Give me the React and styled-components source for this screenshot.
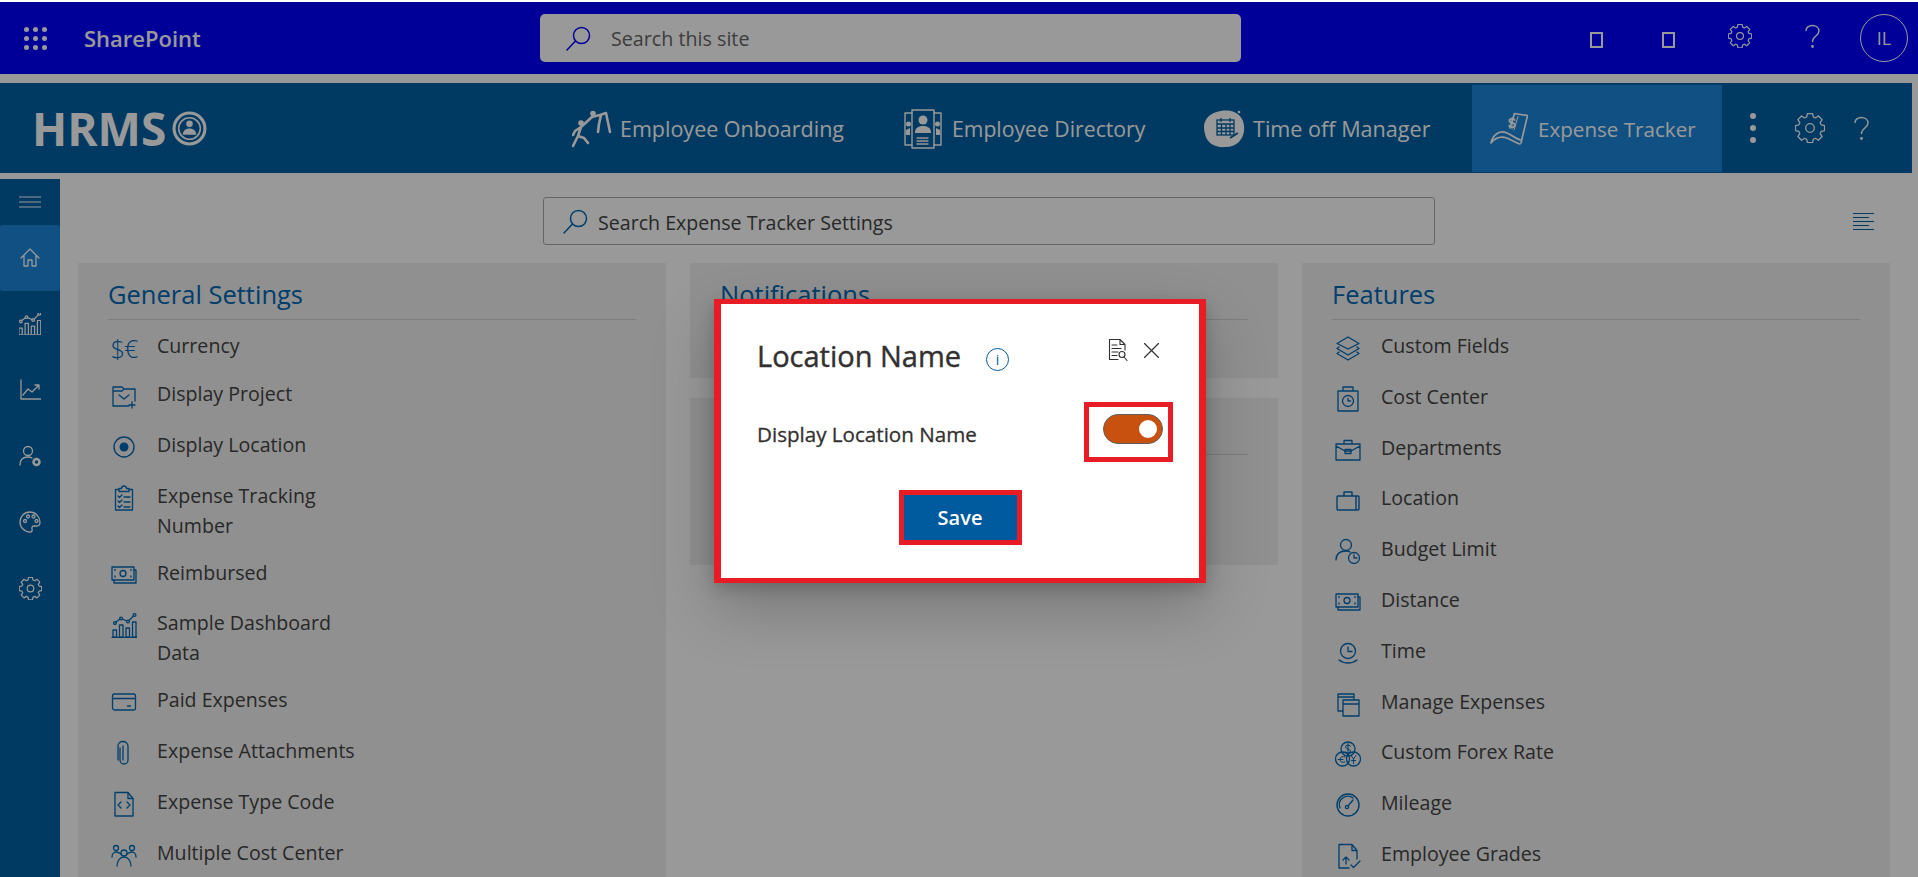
import React from 'react'
import styled, { createGlobalStyle } from 'styled-components'

const GlobalStyle = createGlobalStyle`
  html, body {
    margin: 0;
    padding: 0;
    background: #fff;
    font-family: "Open Sans", "Noto Sans", sans-serif;
  }
  * {
    box-sizing: border-box;
  }
`

const Page = styled.div`
  position: relative;
  width: 1918px;
  height: 877px;
  padding-top: 2px;
  overflow: hidden;
  background: #fff;
`

const SuiteBar = styled.header`
  height: 72px;
  display: flex;
  align-items: center;
  background: #0000ff;
  color: #fff;
`

const Brand = styled.div`
  width: 540px;
  padding-left: 24px;
  display: flex;
  align-items: center;
  gap: 37px;
`

const BrandName = styled.span`
  font-size: 22px;
  font-weight: 600;
`

const SiteSearch = styled.div`
  width: 701px;
  height: 48px;
  padding-left: 26px;
  display: flex;
  align-items: center;
  gap: 20px;
  border-radius: 5px;
  background: #fff;
  color: #0000ff;
  font-size: 19.7px;

  span {
    padding-top: 1px;
    color: #666;
  }
`

const SuiteActions = styled.div`
  flex: 1;
  padding-right: 10px;
  display: flex;
  justify-content: flex-end;
  align-items: center;
  gap: 24px;
`

const SuiteCell = styled.div`
  width: 48px;
  height: 48px;
  display: flex;
  justify-content: center;
  align-items: center;
  font-size: 18px;

  svg {
    margin-top: -4px;
  }
`

const Tofu = styled.span`
  width: 13px;
  height: 16px;
  margin-top: 3px;
  border: 2px solid #fff;
`

const Avatar = styled(SuiteCell)`
  border: 1px solid #fff;
  border-radius: 50%;
`

const AppBar = styled.div`
  width: 1912px;
  height: 90px;
  margin-top: 9px;
  display: flex;
  background: #0061a3;
  color: #fff;
`

const Logo = styled.div`
  width: 554px;
  padding-left: 32px;
  display: flex;
  align-items: center;
  gap: 6px;
  font-size: 46px;
  font-weight: 700;
`

const NavItem = styled.div`
  width: ${props => props.$w}px;
  margin: 2px 0 1px;
  padding-left: 18px;
  display: flex;
  align-items: center;
  gap: ${props => props.$gap || 10}px;
  font-size: ${props => props.$size || 21.2}px;
  background: ${props => (props.$active ? '#1c85d9' : 'transparent')};
`

const AppActions = styled.div`
  flex: 1;
  display: flex;
  align-items: center;
  padding-left: 28px;
  gap: 28px;

  svg:first-child {
    margin-right: 11px;
  }
`

const Body = styled.div`
  display: flex;
  margin-top: 6px;
`

const Sidebar = styled.nav`
  width: 60px;
  height: 700px;
  flex: none;
  background: #0061a3;
  color: #fff;
`

const SideToggle = styled.div`
  height: 46px;
  display: flex;
  justify-content: center;
  align-items: center;
`

const SideItem = styled.div`
  height: 66px;
  display: flex;
  justify-content: center;
  align-items: center;
  border-radius: 3px;
  background: ${props => (props.$active ? '#1c85d9' : 'transparent')};
`

const Content = styled.main`
  flex: 1;
  padding: 18px 28px 0 18px;
`

const Toolbar = styled.div`
  height: 48px;
  padding-left: 465px;
  display: flex;
  align-items: center;
`

const SettingsSearch = styled.div`
  width: 892px;
  height: 48px;
  padding-left: 19px;
  display: flex;
  align-items: center;
  gap: 10px;
  border: 1px solid #ababab;
  border-radius: 3px;
  color: #0068b4;
  font-size: 19.6px;

  span {
    padding-top: 2px;
    color: #444;
  }
`

const AlignIcon = styled.div`
  width: 21px;
  margin-left: auto;
  margin-right: 16px;
  display: flex;
  flex-direction: column;
  gap: 3px;
`

const AlignLine = styled.i`
  display: block;
  height: 1px;
  width: ${props => (props.$short ? '16px' : '21px')};
  background: #0061a3;
`

const Columns = styled.div`
  margin-top: 18px;
  display: grid;
  grid-template-columns: repeat(3, 588px);
  gap: 24px;
  align-items: start;
`

const Stack = styled.div`
  display: flex;
  flex-direction: column;
  gap: 20px;
`

const Panel = styled.section`
  height: ${props => props.$h}px;
  padding: 0 30px;
  background: #f0f0f0;
`

const PanelHead = styled.h2`
  height: 57px;
  margin: 0;
  padding-top: 14px;
  border-bottom: 1px solid #d0d0d0;
  color: #0068b4;
  font-size: 25.5px;
  font-weight: 400;
  line-height: 34px;
`

const List = styled.ul`
  margin: 0;
  padding: 11px 0 0;
  list-style: none;
`

const Row = styled.li`
  height: ${props => props.$h || 50.8}px;
  display: flex;
  align-items: flex-start;
  color: #444;
  font-size: 19.6px;
  line-height: 30px;
`

const RowIcon = styled.span`
  width: 32px;
  height: 30px;
  margin: 2px 17px 0 0;
  flex: none;
  display: flex;
  justify-content: center;
  align-items: center;
  color: #0068b4;
`

const Money = styled.span`
  font-size: 25px;
  font-weight: 300;
  letter-spacing: -1px;
`

const RowText = styled.span`
  max-width: 200px;
`

const Overlay = styled.div`
  position: absolute;
  top: 2px;
  right: 0;
  bottom: 0;
  left: 0;
  padding: 297px 0 0 2px;
  display: flex;
  justify-content: center;
  align-items: flex-start;
  background: rgba(0, 0, 0, 0.4);
`

const Modal = styled.div`
  width: 492px;
  height: 284px;
  border-style: solid;
  border-color: #e81c24;
  border-width: 5px 7px 5px 7px;
  background: #fff;
  box-shadow: 0 25.6px 57.6px rgba(0, 0, 0, 0.22), 0 4.8px 14.4px rgba(0, 0, 0, 0.18);
`

const ModalHead = styled.div`
  height: 40px;
  margin-top: 32px;
  padding: 0 40px 0 36px;
  display: flex;
  align-items: center;
  color: #323130;
`

const ModalTitle = styled.h3`
  margin: 0 25px 0 0;
  font-size: 29px;
  font-weight: 400;
  line-height: 40px;
  -webkit-text-stroke: 0.4px #323130;
`

const InfoIcon = styled.span`
  width: 23px;
  height: 23px;
  margin-top: 6px;
  display: flex;
  justify-content: center;
  align-items: center;
  border: 1.5px solid #005a9e;
  border-radius: 50%;
  color: #005a9e;
  font-size: 14px;
`

const ModalTools = styled.div`
  margin: -12px 0 0 auto;
  display: flex;
  align-items: center;
  gap: 16px;
`

const ModalRow = styled.div`
  height: 60px;
  margin-top: 26px;
  padding: 0 26px 0 36px;
  display: flex;
  justify-content: space-between;
  align-items: center;
`

const ModalLabel = styled.span`
  padding-top: 4px;
  color: #323130;
  font-size: 20.6px;
  -webkit-text-stroke: 0.3px #323130;
`

const ToggleBox = styled.div`
  width: 89px;
  height: 60px;
  padding: 7px 0 0 14px;
  border: 5px solid #e81c24;
`

const Toggle = styled.div`
  width: 60px;
  height: 30px;
  padding-right: 5px;
  display: flex;
  justify-content: flex-end;
  align-items: center;
  border: 1px solid #605e5c;
  border-radius: 15px;
  background: #c8510f;
`

const Knob = styled.i`
  width: 18px;
  height: 18px;
  border-radius: 50%;
  background: #fff;
`

const ModalFoot = styled.div`
  margin-top: 28px;
  display: flex;
  justify-content: center;
`

const SaveButton = styled.button`
  width: 123px;
  height: 55px;
  border: 5px solid #e81c24;
  background: #005a9e;
  color: #fff;
  font-family: inherit;
  font-size: 20px;
  font-weight: 600;
`

const Svg = ({ w = 26, h = 26, box, stroke = 1.3, children }) => (
  <svg
    width={w}
    height={h}
    viewBox={box || `0 0 ${w} ${h}`}
    fill="none"
    stroke="currentColor"
    strokeWidth={stroke}
    strokeLinecap="round"
    strokeLinejoin="round"
  >
    {children}
  </svg>
)

const gearPath =
  'M10.6 1.5h4.8l.7 3.2 2 .9 2.8-1.8 3.4 3.4-1.8 2.8.9 2 3.2.7v4.8l-3.2.7-.9 2 1.8 2.8-3.4 3.4-2.8-1.8-2 .9-.7 3.2h-4.8l-.7-3.2-2-.9-2.8 1.8-3.4-3.4 1.8-2.8-.9-2-3.2-.7v-4.8l3.2-.7.9-2-1.8-2.8 3.4-3.4 2.8 1.8 2-.9z'

const Gear = ({ size = 24, stroke = 1.4 }) => (
  <Svg w={size} h={size} box="-1 -1 28 28" stroke={stroke}>
    <path d={gearPath} transform="translate(0 -2)" />
    <circle cx="13" cy="13" r="4" />
  </Svg>
)

const Search = ({ size = 25 }) => (
  <Svg w={size} h={size} box="0 0 25 25" stroke={1.5}>
    <circle cx="15.5" cy="9.5" r="8" />
    <path d="M9.5 15 1 24" />
  </Svg>
)

const Question = ({ w = 17, h = 25 }) => (
  <Svg w={w} h={h} box="0 0 17 25" stroke={1.4}>
    <path d="M2 6.5C2 3.5 5 1.5 8.5 1.5s6.5 2 6.5 5.5c0 5-6.5 5-6.5 10.5" />
    <circle cx="8.5" cy="22.5" r=".7" fill="currentColor" />
  </Svg>
)

const Waffle = () => (
  <Svg w={23} h={23} stroke={0}>
    {[2.5, 11.5, 20.5].flatMap(y =>
      [2.5, 11.5, 20.5].map(x => <circle key={`${x}-${y}`} cx={x} cy={y} r="2.5" fill="currentColor" />)
    )}
  </Svg>
)

const LogoBadge = () => (
  <Svg w={35} h={35} box="0 0 34 34" stroke={3}>
    <circle cx="17" cy="17" r="15" />
    <circle cx="17" cy="17" r="10.5" strokeWidth="1.5" />
    <circle cx="17" cy="12.5" r="3.2" fill="currentColor" stroke="none" />
    <path d="M10.5 23c0-4 3-6 6.5-6s6.5 2 6.5 6z" fill="currentColor" stroke="none" />
  </Svg>
)

const OnboardIcon = () => (
  <Svg w={40} h={38} stroke={2.6}>
    <circle cx="9" cy="13" r="2.8" fill="currentColor" stroke="none" />
    <circle cx="21" cy="3.500" r="2.800" fill="currentColor" stroke="none" />
    <path d="M9 17 6 26 1 36M6 26l6 2 4 5M9 17l-6 4-2 4M9 17 20 7" />
    <path d="M20 7l8-2 6-2 4 19M29 5l-2 9-1 8" />
  </Svg>
)

const DirectoryIcon = () => (
  <Svg w={38} h={40} stroke={1.4}>
    <rect x="8" y="1" width="22" height="38" />
    <path d="M8 4H1v32h7M30 4h7v32h-7" />
    <circle cx="19" cy="11" r="4.5" fill="currentColor" stroke="none" />
    <path d="M11 24c0-5 3-7 8-7s8 2 8 7z" fill="currentColor" stroke="none" />
    <path d="M13 29h12M13 32h12M13 35h12" strokeDasharray="2 1" />
    <circle cx="4.5" cy="15" r="2.5" fill="currentColor" stroke="none" />
    <circle cx="33.5" cy="15" r="2.5" fill="currentColor" stroke="none" />
    <path d="M2 26v-5l4-2v7zM36 26v-5l-4-2v7z" fill="currentColor" stroke="none" />
  </Svg>
)

const TimeOffIcon = () => (
  <svg width="43" height="40" viewBox="0 0 43 40">
    <path
      d="M4 8C10 2 22 0 30 3c8 3 11 11 10 19-1 9-8 16-18 16C12 39 3 35 1 25-1 18 0 12 4 8z"
      fill="currentColor"
    />
    <circle cx="35" cy="3" r="1.3" fill="currentColor" />
    <g fill="none" stroke="#0061a3" strokeWidth="1.3">
      <rect x="13" y="11" width="17" height="15" />
      <path d="M13 15h17M17 9v4M26 9v4M13 19h17M13 22.5h17M17.5 15v11M22 15v11M26 15v11" />
      <path d="M26 29l8-5" strokeWidth="2" />
    </g>
  </svg>
)

const ExpenseIcon = () => (
  <Svg w={38} h={38} stroke={1.7}>
    <path d="M20 18 24.500 3.500 37.500 5.500 31 33" />
    <path d="M28 6.500 24 20" strokeWidth="1" />
    <path d="M1 33c2-9 9-13 16-10 5 2 9 6 14 7M1 33c4-5 10-7 16-5 5 2 9 5 13 6" />
    <text
      x="22"
      y="18"
      fontFamily="Liberation Sans, sans-serif"
      fontSize="14"
      fontWeight="700"
      fill="currentColor"
      stroke="none"
      textAnchor="middle"
    >
      $
    </text>
  </Svg>
)

const Dots = () => (
  <Svg w={6} h={30} stroke={0}>
    <circle cx="3" cy="3" r="3" fill="currentColor" />
    <circle cx="3" cy="15" r="3" fill="currentColor" />
    <circle cx="3" cy="27" r="3" fill="currentColor" />
  </Svg>
)

const barsChart = (
  <>
    <path d="M2 25v-7h3.500v7zM8.500 25V13H12v12zM15 25V16h3.500v9zM21.500 25V10H25v15zM1 25.300h25" />
    <circle cx="4" cy="11" r="1.400" />
    <circle cx="10" cy="6.500" r="1.400" />
    <circle cx="17" cy="9.500" r="1.400" />
    <circle cx="23.500" cy="3" r="1.400" />
    <path d="m5 10 4-3M11.500 7l4 2M18 8.500 22.500 4" />
  </>
)

const cash = (
  <>
    <path d="M1 5h22v13H1z" />
    <path d="M3 18v3h22V8h-2" />
    <circle cx="12" cy="11.500" r="3" />
    <path d="M4 7.500v1.500M20 14v1.500M4 14v1.500M20 7.500V9" strokeDasharray="1 1" />
  </>
)

const rowIcons = {
  project: (
    <>
      <path d="M18 23H2V4h9l2 2h11v12M2 8h9l2-2" />
      <path d="m8 12 5 4 5-4M21 19v6M18 22h6" />
    </>
  ),
  radio: (
    <>
      <circle cx="13" cy="13" r="10" strokeWidth="1.400" />
      <circle cx="13" cy="13" r="4.500" fill="currentColor" stroke="none" />
    </>
  ),
  clipboard: (
    <>
      <path d="M8 4.500H4.500V25h17V4.500H18M8 6.500h10v-3h-2.500a2.500 2.500 0 0 0-5 0H8z" />
      <path d="M7 11l1.500 1.500L11 10M7 16l1.500 1.500L11 15M7 21l1.500 1.500L11 20M13 12h6M13 17h6M13 22h6" />
    </>
  ),
  cash,
  bars: barsChart,
  wallet: (
    <>
      <rect x="1.500" y="5" width="23" height="16" rx="2" />
      <path d="M1.500 9.500h23M16.500 17h3" />
    </>
  ),
  clip: (
    <path d="M9 8v12a4 4 0 0 0 8 0V6a5 5 0 0 0-5-4.500C9 1.500 7 3.500 7 6v14M12 6v14" />
  ),
  code: (
    <>
      <path d="M4 1.500h13l5 6V25H4z" />
      <path d="M17 1.500v6h5M10 11l-3 3 3 3M16 11l3 3-3 3" />
    </>
  ),
  people: (
    <>
      <circle cx="5" cy="6" r="2.500" />
      <circle cx="21" cy="6" r="2.500" />
      <circle cx="13" cy="11" r="3" />
      <path d="M1 15c0-3 2-5 4-5 2 0 3 1 5 2M25 15c0-3-2-5-4-5-2 0-3 1-5 2M6 24c0-5 3-9 7-9s7 4 7 9" />
    </>
  ),
  layers: (
    <>
      <path d="M13 2 24 8.500 13 14 2 8.500z" />
      <path d="m4 12-2 1.500L13 20l11-6.500-2-1.500M4 17l-2 1.500L13 25l11-6.500-2-1.500" />
    </>
  ),
  costbox: (
    <>
      <path d="M3 5h20v20H3zM8 5V1h10v4z" />
      <circle cx="13" cy="15" r="5.500" />
      <path d="M13 12.500V15h2.500" />
    </>
  ),
  briefcase: (
    <>
      <path d="M1 7h24v16H1zM9 7V3.500h8V7M1 9l9 5h6l9-5" />
      <path d="M10 12.500h6v4h-6z" />
    </>
  ),
  suitcase: (
    <path d="M3 9h20a1 1 0 0 1 1 1v12a1 1 0 0 1-1 1H3a1 1 0 0 1-1-1V10a1 1 0 0 1 1-1zM9 9V5h8v4M21 9v14" strokeWidth="1.400" />
  ),
  userclock: (
    <>
      <circle cx="11" cy="7" r="5.500" />
      <path d="M1 22c0-6 4-9 10-9 1.500 0 3 .2 4 1" />
      <circle cx="19" cy="20" r="5.500" />
      <path d="M19 17v3h3" />
    </>
  ),
  timearc: (
    <>
      <circle cx="13" cy="11" r="7.500" />
      <path d="M13 7v4.500h4M4 20c5 4 13 4 18 0" />
    </>
  ),
  windows: (
    <>
      <path d="M3 3h16v17H3zM3 6h16" />
      <path d="M8 9h16v16H8zM8 13h16" fill="#f0f0f0" />
    </>
  ),
  coins: (
    <>
      <circle cx="13" cy="8" r="7" />
      <circle cx="7.500" cy="18" r="7" />
      <circle cx="18.500" cy="18" r="7" />
      <path d="M15.500 5c-2-1.500-5-1-5 1s5 2 5 4-3 2.500-5 1M13 2.500v11M10 16c-2-1-5 0-5 2.500S8 22 10 21M3 18.500h5M16 14.500l2.500 3.500 2.500-3.500M18.500 18v4.500M16.500 19.500h4" strokeWidth="1" />
    </>
  ),
  gauge: (
    <>
      <circle cx="13" cy="13" r="11" strokeWidth="1.400" />
      <path d="M5 16a8.500 8.500 0 0 1 13-10" />
      <circle cx="12" cy="15" r="1.600" />
      <path d="m13 14 5-6" />
    </>
  ),
  upload: (
    <>
      <path d="M14 25H4V1.500h13l5 6V16M17 1.500v6h5" />
      <path d="M11 21v-7M8 17l3-3 3 3M16 22l2.500 2.500L25 18" />
    </>
  )
}

const RowGlyph = ({ name }) => <Svg>{rowIcons[name]}</Svg>

const generalRows = [
  { icon: 'money', label: 'Currency', h: 48 },
  { icon: 'project', label: 'Display Project' },
  { icon: 'radio', label: 'Display Location' },
  { icon: 'clipboard', label: 'Expense Tracking Number', h: 77 },
  { icon: 'cash', label: 'Reimbursed' },
  { icon: 'bars', label: 'Sample Dashboard Data', h: 77 },
  { icon: 'wallet', label: 'Paid Expenses' },
  { icon: 'clip', label: 'Expense Attachments' },
  { icon: 'code', label: 'Expense Type Code' },
  { icon: 'people', label: 'Multiple Cost Center' }
]

const featureRows = [
  { icon: 'layers', label: 'Custom Fields' },
  { icon: 'costbox', label: 'Cost Center' },
  { icon: 'briefcase', label: 'Departments' },
  { icon: 'suitcase', label: 'Location' },
  { icon: 'userclock', label: 'Budget Limit' },
  { icon: 'cash', label: 'Distance' },
  { icon: 'timearc', label: 'Time' },
  { icon: 'windows', label: 'Manage Expenses' },
  { icon: 'coins', label: 'Custom Forex Rate' },
  { icon: 'gauge', label: 'Mileage' },
  { icon: 'upload', label: 'Employee Grades' }
]

const SettingsList = ({ rows }) => (
  <List>
    {rows.map(row => (
      <Row key={row.label} $h={row.h}>
        <RowIcon>{row.icon === 'money' ? <Money>$€</Money> : <RowGlyph name={row.icon} />}</RowIcon>
        <RowText>{row.label}</RowText>
      </Row>
    ))}
  </List>
)

const sideIcons = [
  <path key="home" d="M2 11 11 2l9 9M5 9v10h4v-6h4v6h4V9" />,
  <g key="chart" transform="translate(-2 -2) scale(.95)">{barsChart}</g>,
  <path key="line" d="M2 1v19h20M4 16l5-6 4 3 7-7M16 6h4v4" />,
  <g key="user">
    <circle cx="9" cy="6" r="4.500" />
    <path d="M1 20c0-5 3-8 8-8 1.500 0 3 .3 4 1" />
    <circle cx="17.500" cy="17" r="3" strokeWidth="2.500" />
  </g>,
  <g key="palette">
    <path d="M11 1C5 1 1 5.500 1 11s4.500 10 10 10c2 0 2.500-1.500 2-3-.5-1.500.5-3 2-3h3c2.500 0 3-2 3-4 0-5-4.500-10-10-10z" />
    <circle cx="6" cy="10" r="1.500" />
    <circle cx="9" cy="5.500" r="1.500" />
    <circle cx="14.500" cy="5.500" r="1.500" />
    <circle cx="17.500" cy="10" r="1.500" />
  </g>
]

export default function App() {
  return (
    <Page>
      <GlobalStyle />
      <SuiteBar>
        <Brand>
          <Waffle />
          <BrandName>SharePoint</BrandName>
        </Brand>
        <SiteSearch>
          <Search />
          <span>Search this site</span>
        </SiteSearch>
        <SuiteActions>
          <SuiteCell>
            <Tofu />
          </SuiteCell>
          <SuiteCell>
            <Tofu />
          </SuiteCell>
          <SuiteCell>
            <Gear />
          </SuiteCell>
          <SuiteCell>
            <Question />
          </SuiteCell>
          <Avatar>IL</Avatar>
        </SuiteActions>
      </SuiteBar>

      <AppBar>
        <Logo>
          HRMS
          <LogoBadge />
        </Logo>
        <NavItem $w={332} $gap={8} $size={21.5}>
          <OnboardIcon />
          Employee Onboarding
        </NavItem>
        <NavItem $w={300}>
          <DirectoryIcon />
          Employee Directory
        </NavItem>
        <NavItem $w={286} $gap={6} $size={21.6}>
          <TimeOffIcon />
          Time off Manager
        </NavItem>
        <NavItem $w={250} $size={20.6} $active>
          <ExpenseIcon />
          Expense Tracker
        </NavItem>
        <AppActions>
          <Dots />
          <Gear size={30} stroke={1.2} />
          <Question w={17} h={27} />
        </AppActions>
      </AppBar>

      <Body>
        <Sidebar>
          <SideToggle>
            <Svg w={22} h={12} stroke={1}>
              <path d="M0 1h22M0 6h22M0 11h22" />
            </Svg>
          </SideToggle>
          {sideIcons.map((icon, i) => (
            <SideItem key={i} $active={i === 0}>
              <Svg w={22} h={22}>
                {icon}
              </Svg>
            </SideItem>
          ))}
          <SideItem>
            <Gear size={23} stroke={1.5} />
          </SideItem>
        </Sidebar>

        <Content>
          <Toolbar>
            <SettingsSearch>
              <Search />
              <span>Search Expense Tracker Settings</span>
            </SettingsSearch>
            <AlignIcon>
              <AlignLine />
              <AlignLine $short />
              <AlignLine />
              <AlignLine $short />
              <AlignLine />
            </AlignIcon>
          </Toolbar>

          <Columns>
            <Panel $h={640}>
              <PanelHead>General Settings</PanelHead>
              <SettingsList rows={generalRows} />
            </Panel>
            <Stack>
              <Panel $h={115}>
                <PanelHead>Notifications</PanelHead>
              </Panel>
              <Panel $h={167}>
                <PanelHead />
              </Panel>
            </Stack>
            <Panel $h={640}>
              <PanelHead>Features</PanelHead>
              <SettingsList rows={featureRows} />
            </Panel>
          </Columns>
        </Content>
      </Body>

      <Overlay>
        <Modal>
          <ModalHead>
            <ModalTitle>Location Name</ModalTitle>
            <InfoIcon>i</InfoIcon>
            <ModalTools>
              <Svg w={20} h={22} stroke={1.1}>
                <path d="M10 20.500H1.500v-20H12l5 5V11M12 .500v5h5M4 6h5M4 9.500h9M4 13h6M4 16.500h5" />
                <circle cx="14" cy="15.500" r="3" />
                <path d="m16 18 3 3.500" />
              </Svg>
              <Svg w={15} h={15} stroke={1.2}>
                <path d="m.5.5 14 14M14.500.5l-14 14" />
              </Svg>
            </ModalTools>
          </ModalHead>
          <ModalRow>
            <ModalLabel>Display Location Name</ModalLabel>
            <ToggleBox>
              <Toggle>
                <Knob />
              </Toggle>
            </ToggleBox>
          </ModalRow>
          <ModalFoot>
            <SaveButton>Save</SaveButton>
          </ModalFoot>
        </Modal>
      </Overlay>
    </Page>
  )
}
